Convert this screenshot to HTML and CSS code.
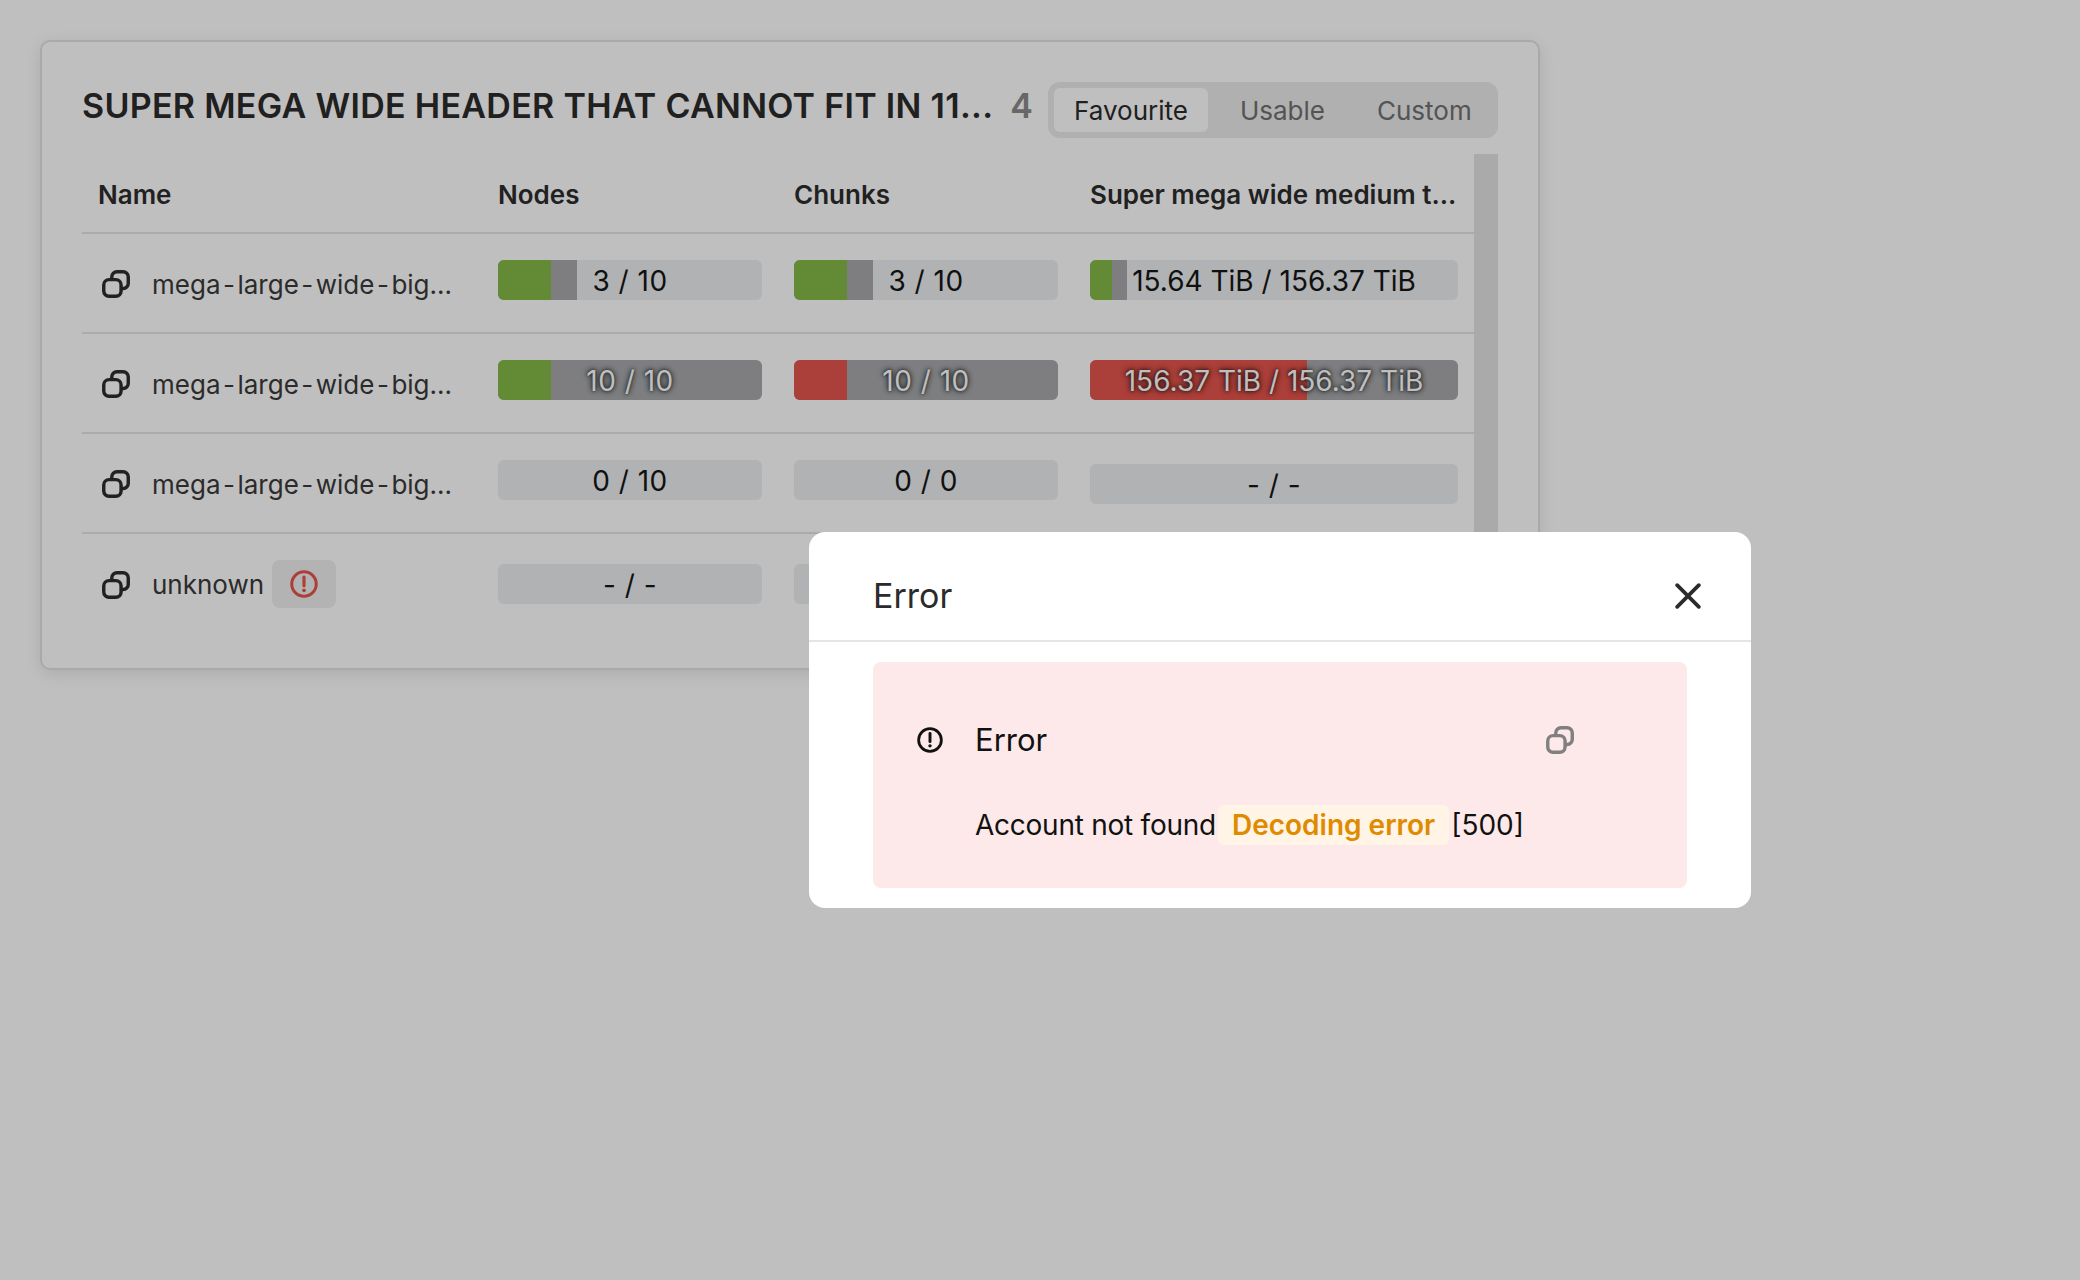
FILE: index.html
```html
<!DOCTYPE html>
<html lang="en">
<head>
    <meta charset="UTF-8">
    <title>Clusters</title>
    <link rel="stylesheet" href="styles.css">
</head>
<body>
    <svg class="defs" width="0" height="0">
        <symbol id="copy" viewBox="0 0 16 16">
            <rect x="1" y="5.5" width="9.9" height="9.5" rx="3" fill="none" stroke="currentColor" stroke-width="1.95"/>
            <path d="M5.6 5.4V3.9A2.9 2.9 0 0 1 8.5 1H12.1A2.9 2.9 0 0 1 15 3.9V7.7A2.9 2.9 0 0 1 12.1 10.6H10.8" fill="none" stroke="currentColor" stroke-width="1.95"/>
        </symbol>
        <symbol id="alert" viewBox="0 0 16 16">
            <circle cx="8" cy="8" r="7" fill="none" stroke="currentColor" stroke-width="1.7"/>
            <path d="M8 4v5" fill="none" stroke="currentColor" stroke-width="1.8" stroke-linecap="round"/>
            <circle cx="8" cy="11.6" r="1.05" fill="currentColor"/>
        </symbol>
    </svg>

    <div class="card">
        <div class="card-head">
            <div class="title-group">
                <h1 class="title">SUPER MEGA WIDE HEADER THAT CANNOT FIT IN 11...</h1>
                <span class="count">4</span>
            </div>
            <div class="tabs">
                <span class="tab tab-active">Favourite</span>
                <span class="tab">Usable</span>
                <span class="tab">Custom</span>
            </div>
        </div>

        <div class="table-wrap">
            <table class="table">
                <colgroup>
                    <col class="col-name">
                    <col class="col-bar">
                    <col class="col-bar">
                    <col class="col-wide">
                </colgroup>
                <thead>
                    <tr>
                        <th>Name</th>
                        <th>Nodes</th>
                        <th>Chunks</th>
                        <th>Super mega wide medium t...</th>
                    </tr>
                </thead>
                <tbody>
                    <tr>
                        <td><div class="name"><svg class="icon"><use href="#copy"/></svg><span class="name-text">mega<span class="dash">-</span>large<span class="dash">-</span>wide<span class="dash">-</span>big...</span></div></td>
                        <td><div class="bar bar-up bar-count"><span class="fill fill-gray" style="width: 30%"></span><span class="fill fill-green" style="width: 20%"></span><span class="bar-text">3 / 10</span></div></td>
                        <td><div class="bar bar-up bar-count"><span class="fill fill-gray" style="width: 30%"></span><span class="fill fill-green" style="width: 20%"></span><span class="bar-text">3 / 10</span></div></td>
                        <td><div class="bar bar-up"><span class="fill fill-gray" style="width: 10%"></span><span class="fill fill-green" style="width: 6%"></span><span class="bar-text">15.64 TiB / 156.37 TiB</span></div></td>
                    </tr>
                    <tr>
                        <td><div class="name"><svg class="icon"><use href="#copy"/></svg><span class="name-text">mega<span class="dash">-</span>large<span class="dash">-</span>wide<span class="dash">-</span>big...</span></div></td>
                        <td><div class="bar bar-up bar-count bar-full"><span class="fill fill-gray" style="width: 100%"></span><span class="fill fill-green" style="width: 20%"></span><span class="bar-text">10 / 10</span></div></td>
                        <td><div class="bar bar-up bar-count bar-full"><span class="fill fill-gray" style="width: 100%"></span><span class="fill fill-red" style="width: 20%"></span><span class="bar-text">10 / 10</span></div></td>
                        <td><div class="bar bar-up bar-full"><span class="fill fill-gray" style="width: 100%"></span><span class="fill fill-red" style="width: 59%"></span><span class="bar-text">156.37 TiB / 156.37 TiB</span></div></td>
                    </tr>
                    <tr>
                        <td><div class="name"><svg class="icon"><use href="#copy"/></svg><span class="name-text">mega<span class="dash">-</span>large<span class="dash">-</span>wide<span class="dash">-</span>big...</span></div></td>
                        <td><div class="bar bar-up bar-count"><span class="bar-text">0 / 10</span></div></td>
                        <td><div class="bar bar-up bar-count"><span class="bar-text">0 / 0</span></div></td>
                        <td><div class="bar bar-count bar-down"><span class="bar-text">- / -</span></div></td>
                    </tr>
                    <tr>
                        <td><div class="name"><svg class="icon"><use href="#copy"/></svg><span class="name-text">unknown</span><span class="badge"><svg class="icon icon-red"><use href="#alert"/></svg></span></div></td>
                        <td><div class="bar bar-count"><span class="bar-text">- / -</span></div></td>
                        <td><div class="bar"></div></td>
                        <td><div class="bar"></div></td>
                    </tr>
                </tbody>
            </table>
            <div class="scrollbar"></div>
        </div>
    </div>

    <div class="backdrop">
        <div class="modal">
            <div class="modal-head">
                <span class="modal-title">Error</span>
                <svg class="close" viewBox="0 0 24 24"><path d="M2 2L22 22M22 2L2 22" fill="none" stroke="currentColor" stroke-width="3.4" stroke-linecap="round"/></svg>
            </div>
            <div class="modal-body">
                <div class="error-box">
                    <div class="error-row">
                        <svg class="error-icon"><use href="#alert"/></svg>
                        <span class="error-title">Error</span>
                        <svg class="icon icon-gray"><use href="#copy"/></svg>
                    </div>
                    <div class="error-msg">
                        <span class="error-text">Account not found</span>
                        <span class="chip">Decoding error</span>
                        <span>[500]</span>
                    </div>
                </div>
            </div>
        </div>
    </div>
</body>
</html>
```

FILE: styles.css
```css
* {
    box-sizing: border-box;
}

body {
    margin: 0;
    height: 1280px;
    padding: 40px;
    background-color: #fff;
    font-family: Inter, "Noto Sans", sans-serif;
    font-size: 26px;
    line-height: 40px;
    color: #333;
}

.defs {
    display: block;
    height: 0;
}

.card {
    width: 1500px;
    height: 630px;
    padding: 40px 40px 0;
    border: 2px solid #e2e2e2;
    border-radius: 10px;
    box-shadow: 0 4px 16px rgba(0, 0, 0, .1);
    overflow: hidden;
}

.card-head {
    display: flex;
    justify-content: space-between;
    align-items: center;
    height: 56px;
}

.title-group {
    display: flex;
    align-items: center;
    gap: 17px;
    margin-top: -8px;
}

.title {
    margin: 0;
    font-size: 34px;
    line-height: 44px;
    font-weight: 600;
    letter-spacing: .3px;
    color: #2b2b2b;
    white-space: nowrap;
}

.count {
    font-size: 34px;
    font-weight: 600;
    color: #8a8a8a;
}

.tabs {
    display: flex;
    width: 450px;
    height: 56px;
    padding: 6px 0 6px 6px;
    border-radius: 12px;
    background-color: #ebebeb;
    color: #707070;
}

.tab {
    padding: 3px 26px 0;
}

.tab-active {
    margin-right: 6px;
    padding: 3px 20px 0;
    border-radius: 6px;
    background-color: #fff;
    color: #2b2b2b;
}

.table-wrap {
    display: flex;
    align-items: flex-start;
    margin-top: 16px;
}

.table {
    width: 1392px;
    flex: none;
    table-layout: fixed;
    border-collapse: collapse;
}

.col-name {
    width: 400px;
}

.col-bar {
    width: 296px;
}

.col-wide {
    width: 400px;
}

.table th {
    height: 79px;
    padding: 3px 16px 0;
    text-align: left;
    font-weight: 600;
    color: #2d2d2d;
    white-space: nowrap;
    border-bottom: 2px solid #e4e4e4;
}

.table td {
    height: 100px;
    padding: 0 16px;
    vertical-align: middle;
    border-bottom: 2px solid #e4e4e4;
}

.table tbody tr:last-child td {
    border-bottom: 0;
}

.scrollbar {
    flex: none;
    width: 24px;
    height: 500px;
    background-color: #e3e3e3;
}

.name {
    display: flex;
    align-items: center;
    padding-left: 4px;
    white-space: nowrap;
    color: #3a3a3a;
}

.name > .icon {
    margin-top: 2px;
    margin-right: 22px;
}

.name-text {
    padding-top: 3px;
}

.dash {
    padding: 0 2.5px;
}

.icon {
    flex: none;
    width: 28px;
    height: 28px;
    color: #2d2d2d;
}

.icon-red {
    color: #e5544c;
}

.icon-gray {
    color: #808080;
}

.badge {
    display: flex;
    align-items: center;
    justify-content: center;
    width: 64px;
    height: 48px;
    margin-left: 8px;
    border-radius: 8px;
    background-color: #efefef;
}

.bar {
    position: relative;
    height: 40px;
    border-radius: 6px;
    background-color: #eceef0;
    overflow: hidden;
    text-align: center;
    font-size: 28px;
    color: #161616;
}

.bar-up {
    margin-bottom: 7px;
}

.bar-down {
    margin-top: 2px;
}

.bar-count {
    letter-spacing: .5px;
}

.fill {
    position: absolute;
    top: 0;
    bottom: 0;
    left: 0;
}

.fill-gray {
    background-color: #a8a9ac;
}

.fill-green {
    background-color: #85b846;
}

.fill-red {
    background-color: #e5544c;
}

.bar-text {
    position: relative;
    display: block;
    padding-top: 1px;
}

.bar-full .bar-text {
    color: #fff;
    text-shadow: 0 0 6px #000, 0 0 3px rgba(0, 0, 0, .6);
}

.backdrop {
    position: fixed;
    top: 0;
    right: 0;
    bottom: 0;
    left: 0;
    background-color: rgba(0, 0, 0, .25);
}

.modal {
    position: absolute;
    top: 532px;
    left: 809px;
    width: 942px;
    height: 376px;
    border-radius: 16px;
    background-color: #fff;
}

.modal-head {
    display: flex;
    justify-content: space-between;
    align-items: center;
    height: 110px;
    padding: 36px 50px 18px 64px;
    border-bottom: 2px solid #e5e5e5;
    font-size: 34px;
    color: #2b2b2b;
}

.modal-title {
    padding-top: 2px;
}

.close {
    width: 26px;
    height: 26px;
    margin-top: 2px;
}

.modal-body {
    padding: 20px 64px;
}

.error-box {
    height: 226px;
    padding: 58px 44px 0;
    border-radius: 8px;
    background-color: #fde9e9;
    color: #111;
    font-size: 28px;
}

.error-row {
    display: flex;
    align-items: center;
    width: 657px;
}

.error-icon {
    flex: none;
    width: 26px;
    height: 26px;
    margin-right: 32px;
}

.error-title {
    flex: 1;
    font-size: 31px;
}

.error-msg {
    display: flex;
    align-items: center;
    gap: 2px;
    margin: 45px 0 0 58px;
    white-space: nowrap;
}

.error-text {
    letter-spacing: -.25px;
}

.chip {
    padding: 0 14px;
    border-radius: 6px;
    background-color: #fff4e5;
    color: #e08a00;
    font-weight: 600;
}
```
